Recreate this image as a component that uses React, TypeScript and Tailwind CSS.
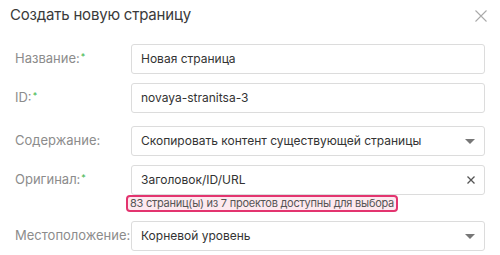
import React from 'react';

const Req = () => <span className="text-[#3bb54a] text-[9px] align-top relative -top-[2px] ml-[1px]">*</span>;

const Caret = () => (
  <svg width="10" height="5" viewBox="0 0 10 5" className="shrink-0">
    <path d="M0 0 L10 0 L5 5 Z" fill="#777" />
  </svg>
);

const Row: React.FC<{ label: string; required?: boolean; children: React.ReactNode }> = ({ label, required, children }) => (
  <div className="flex items-start">
    <div className="w-[131px] shrink-0 pl-[15px] h-[30px] flex items-center text-[13px] text-[#8c8c8c]">
      <span>{label}</span>
      {required && <Req />}
    </div>
    <div className="w-[354px]">{children}</div>
  </div>
);

const box = 'h-[30px] border border-[#dcdcdc] rounded-[3px] px-[9px] flex items-center justify-between text-[12px] text-[#333]';

export default function App() {
  return (
    <div className="w-[500px] h-[255px] bg-white overflow-hidden" style={{ fontFamily: 'Inter, "Noto Sans", sans-serif' }}>
      <div className="flex items-center justify-between pl-[10px] pr-[13px] pt-[1px] h-[30px]">
        <h2 className="text-[15px] text-[#3a3a3a] font-normal tracking-[-0.2px]">Создать новую страницу</h2>
        <svg width="12" height="12" viewBox="0 0 12 12">
          <path d="M0.5 0.5 L11.5 11.5 M11.5 0.5 L0.5 11.5" stroke="#aaa" strokeWidth="1.1" />
        </svg>
      </div>

      <div className="mt-[14px] flex flex-col">
        <Row label="Название:" required>
          <div className={box}>
            <span>Новая страница</span>
          </div>
        </Row>
        <div className="h-[9px]" />
        <Row label="ID:" required>
          <div className={box}>
            <span>novaya-stranitsa-3</span>
          </div>
        </Row>
        <div className="h-[13px]" />
        <Row label="Содержание:">
          <div className={box}>
            <span>Скопировать контент существующей страницы</span>
            <Caret />
          </div>
        </Row>
        <div className="h-[9px]" />
        <Row label="Оригинал:" required>
          <div className={box}>
            <span>Заголовок/ID/URL</span>
            <svg width="8" height="8" viewBox="0 0 8 8">
              <path d="M0.5 0.5 L7.5 7.5 M7.5 0.5 L0.5 7.5" stroke="#555" strokeWidth="1.3" />
            </svg>
          </div>
          <div className="-ml-[5px] w-fit flex items-center h-[17px] px-[2px] border-2 border-[#e3346f] rounded-[4px] bg-[#fde9ef] text-[11px] tracking-[-0.25px] text-[#555] leading-none">
            83 страниц(ы) из 7 проектов доступны для выбора
          </div>
        </Row>
        <div className="h-[9px]" />
        <Row label="Местоположение:">
          <div className={box}>
            <span>Корневой уровень</span>
            <Caret />
          </div>
        </Row>
      </div>
    </div>
  );
}
